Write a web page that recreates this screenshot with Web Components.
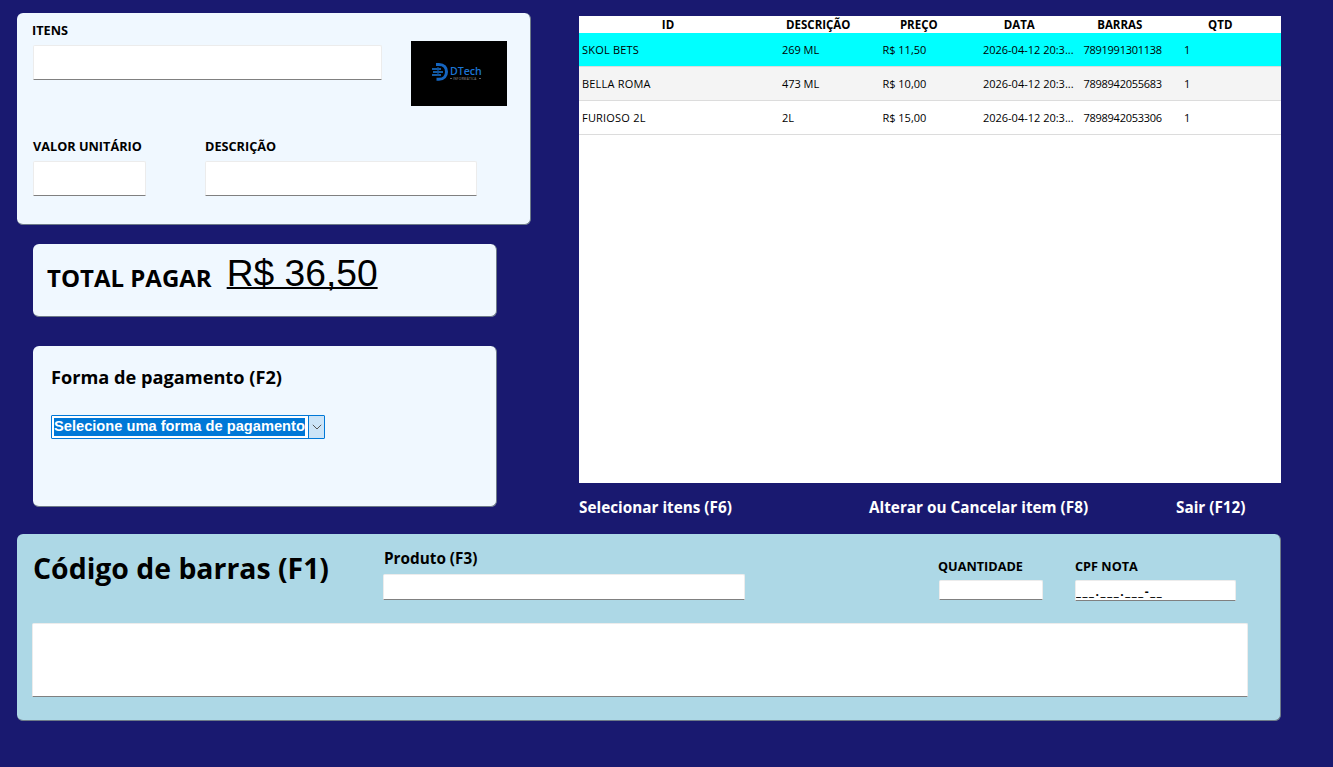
<!DOCTYPE html>
<html lang="pt-BR">
<head>
<meta charset="utf-8">
<title>PDV</title>
<style>
  html, body { margin: 0; height: 767px; overflow: hidden; background: #191970; }
  body { font-family: "Open Sans", "Noto Sans", sans-serif; color: #000; }
</style>
</head>
<body>
<pdv-app></pdv-app>

<script>
// Panel with rounded corners
class PdvPanel extends HTMLElement {
  constructor() {
    super();
    this.attachShadow({ mode: 'open' });
    this.shadowRoot.innerHTML = `
      <style>
        :host {
          display: block;
          box-sizing: border-box;
          background: var(--panel-bg, #f0f8ff);
          border-radius: 6px;
          border-right: 1px solid #6d7a88;
          border-bottom: 1px solid #6d7a88;
        }
      </style>
      <slot></slot>
    `;
  }
}

// Label over a flat input box
class PdvField extends HTMLElement {
  constructor() {
    super();
    this.attachShadow({ mode: 'open' });
    const label = this.getAttribute('label') || '';
    const value = this.getAttribute('value') || '';
    this.shadowRoot.innerHTML = `
      <style>
        :host { display: block; }
        .label {
          display: block;
          font-weight: 700;
          font-size: var(--label-size, 12.7px);
          line-height: var(--label-line, 14px);
          margin: 0 0 var(--label-gap, 8px) var(--label-x, 0);
          white-space: nowrap;
        }
        .box {
          box-sizing: border-box;
          width: var(--box-w, 100px);
          height: var(--box-h, 35px);
          margin-left: var(--box-x, 0);
          background: #fff;
          border: 1px solid #ececec;
          border-bottom: 1px solid #808080;
          border-radius: 2px 2px 0 0;
          font-size: 12px;
          font-weight: 700;
          letter-spacing: 1.6px;
          line-height: 14px;
          padding-top: 4px;
          white-space: nowrap;
          overflow: hidden;
        }
      </style>
      ${label ? `<span class="label">${label}</span>` : ''}
      <div class="box">${value}</div>
    `;
  }
}

// Logo on black
class PdvLogo extends HTMLElement {
  constructor() {
    super();
    this.attachShadow({ mode: 'open' });
    this.shadowRoot.innerHTML = `
      <style>
        :host { display: block; width: 96px; height: 65px; background: #000; }
        svg { display: block; }
      </style>
      <svg width="96" height="65" viewBox="0 0 96 65">
        <path d="M25 23.5h3c5 0 7.5 3.2 7.5 7.3s-2.5 7.5-7.5 7.5h-2.5" fill="none" stroke="#1565c0" stroke-width="3"/>
        <path d="M21 28h9M22 31h10M21 34h9" stroke="#1a78d8" stroke-width="1.5"/>
        <path d="M27 26v9" stroke="#0f4f9c" stroke-width="1.2"/>
        <text x="39" y="33.5" font-family="Open Sans, sans-serif" font-size="10.6" font-weight="600" fill="#1c74d4">DTech</text>
        <path d="M39 37.5h2M68 37.5h2" stroke="#8a8a8a" stroke-width=".7"/>
        <text x="42" y="38.6" font-family="Open Sans, sans-serif" font-size="3.1" letter-spacing=".3" fill="#9a9a9a">INFORMÁTICA</text>
      </svg>
    `;
  }
}

// Payment dropdown, focused look
class PdvSelect extends HTMLElement {
  constructor() {
    super();
    this.attachShadow({ mode: 'open' });
    this.shadowRoot.innerHTML = `
      <style>
        :host {
          display: flex;
          box-sizing: border-box;
          width: 274px;
          height: 24px;
          background: #fff;
          border: 1px solid #0078d7;
          border-radius: 1px;
        }
        .text {
          flex: 1;
          display: flex;
          padding: 2px 3px 2px 2px;
        }
        .text span {
          flex: 1;
          background: #0078d7;
          color: #fff;
          font: 700 14.67px/16px "Liberation Sans", Arial, sans-serif;
          white-space: nowrap;
          overflow: hidden;
        }
        .btn {
          width: 15px;
          background: #cce4f7;
          border-left: 1px solid #0078d7;
          display: flex;
          align-items: center;
          justify-content: center;
        }
      </style>
      <div class="text"><span><slot></slot></span></div>
      <div class="btn">
        <svg width="10" height="6" viewBox="0 0 10 6"><path d="M.8.8 5 5l4.2-4.2" fill="none" stroke="#555" stroke-width="1"/></svg>
      </div>
    `;
  }
}

// Sale items
class PdvTable extends HTMLElement {
  constructor() {
    super();
    this.attachShadow({ mode: 'open' });
    const rows = [
      ['SKOL BETS', '269 ML', 'R$ 11,50', '2026-04-12 20:3...', '7891991301138', '1'],
      ['BELLA ROMA', '473 ML', 'R$ 10,00', '2026-04-12 20:3...', '7898942055683', '1'],
      ['FURIOSO 2L', '2L', 'R$ 15,00', '2026-04-12 20:3...', '7898942053306', '1']
    ];
    const head = ['ID', 'DESCRIÇÃO', 'PREÇO', 'DATA', 'BARRAS', 'QTD'];
    this.shadowRoot.innerHTML = `
      <style>
        :host {
          display: block;
          height: 467px;
          background: #fff;
          font-size: 11px;
        }
        .head, .row { display: grid; }
        .head {
          grid-template-columns: 189px repeat(5, 100.5px);
          height: 17px;
          line-height: 17px;
          font-size: 11.5px;
          font-weight: 700;
          text-align: center;
        }
        .head div:first-child { padding-right: 11px; }
        .row {
          grid-template-columns: 199.9px repeat(5, 100.5px);
          box-sizing: border-box;
          height: 34px;
          line-height: 33px;
          padding-left: 3px;
          border-bottom: 1px solid #dcdcdc;
          white-space: nowrap;
        }
        .row div:nth-child(1) { letter-spacing: .2px; }
        .row div:nth-child(5) { letter-spacing: -.25px; }
        .row.selected { background: #00ffff; }
        .row.alt { background: #f4f4f4; }
      </style>
      <div class="head">${head.map(h => `<div>${h}</div>`).join('')}</div>
      ${rows.map((r, i) => `<div class="row ${i === 0 ? 'selected' : i === 1 ? 'alt' : ''}">${r.map(c => `<div>${c}</div>`).join('')}</div>`).join('')}
    `;
  }
}

// Whole screen
class PdvApp extends HTMLElement {
  constructor() {
    super();
    this.attachShadow({ mode: 'open' });
    this.shadowRoot.innerHTML = `
      <style>
        :host {
          display: block;
          box-sizing: border-box;
          width: 1333px;
          height: 767px;
          padding: 13px 0 0 17px;
        }
        .top { display: flex; height: 521px; }
        .left { width: 514px; margin-right: 48px; }
        .right { width: 702px; padding-top: 3px; }

        .items { height: 212px; padding: 10px 0 0 16px; }
        .items-top { display: flex; height: 116px; }
        .items-top pdv-logo { margin: 18px 0 0 29px; }
        .items-bottom { display: flex; gap: 59px; }

        .total {
          display: flex;
          align-items: baseline;
          gap: 15px;
          box-sizing: border-box;
          width: 464px;
          height: 73px;
          margin: 19px 0 0 16px;
          padding: 0 0 0 14px;
        }
        .total b { font-size: 24px; line-height: 67px; white-space: nowrap; }
        .total u {
          font: 37.2px/58px "Liberation Sans", Arial, sans-serif;
          white-space: nowrap;
          text-decoration-skip-ink: none;
          text-decoration-thickness: 2px;
          position: relative;
          top: -1px;
        }

        .pay {
          box-sizing: border-box;
          width: 464px;
          height: 161px;
          margin: 29px 0 0 16px;
          padding: 20px 0 0 18px;
        }
        .pay h2 { margin: 0 0 27px; font-size: 18.2px; line-height: 22px; font-weight: 700; white-space: nowrap; }

        .actions {
          display: flex;
          margin-top: 14px;
          color: #fff;
          font-size: 15.3px;
          line-height: 20px;
          font-weight: 700;
          white-space: nowrap;
        }
        .actions span:nth-child(1) { width: 290px; }
        .actions span:nth-child(2) { width: 307px; }

        .bar {
          --panel-bg: #add8e6;
          width: 1264px;
          height: 187px;
          padding: 0 0 0 15px;
        }
        .bar-top { display: flex; height: 89px; }
        .bar-top h1 { margin: 13px 0 0 1px; width: 350px; font-size: 28.4px; line-height: 42px; font-weight: 700; white-space: nowrap; }
        .prod { margin-top: 14px; }
        .qty { margin: 25px 0 0 194px; }
        .cpf { margin: 25px 0 0 32px; }
      </style>
      <div class="top">
        <div class="left">
          <pdv-panel class="items">
            <div class="items-top">
              <pdv-field label="ITENS" style="--box-w:349px;--label-x:-1px"></pdv-field>
              <pdv-logo></pdv-logo>
            </div>
            <div class="items-bottom">
              <pdv-field label="VALOR UNITÁRIO" style="--box-w:113px"></pdv-field>
              <pdv-field label="DESCRIÇÃO" style="--box-w:272px"></pdv-field>
            </div>
          </pdv-panel>
          <pdv-panel class="total"><b>TOTAL PAGAR</b><u>R$ 36,50</u></pdv-panel>
          <pdv-panel class="pay">
            <h2>Forma de pagamento (F2)</h2>
            <pdv-select>Selecione uma forma de pagamento</pdv-select>
          </pdv-panel>
        </div>
        <div class="right">
          <pdv-table></pdv-table>
          <div class="actions">
            <span>Selecionar itens (F6)</span>
            <span>Alterar ou Cancelar item (F8)</span>
            <span>Sair (F12)</span>
          </div>
        </div>
      </div>
      <pdv-panel class="bar">
        <div class="bar-top">
          <h1>Código de barras (F1)</h1>
          <pdv-field class="prod" label="Produto (F3)" style="--box-w:362px;--box-h:26px;--label-size:15.3px;--label-line:20px;--label-gap:6px;--label-x:1px"></pdv-field>
          <pdv-field class="qty" label="QUANTIDADE" style="--box-w:104px;--box-h:20px;--label-gap:7px;--label-x:-1px"></pdv-field>
          <pdv-field class="cpf" label="CPF NOTA" value="___.___.___-__" style="--box-w:161px;--box-h:21px;--label-gap:7px"></pdv-field>
        </div>
        <pdv-field style="--box-w:1216px;--box-h:74px"></pdv-field>
      </pdv-panel>
    `;
  }
}

customElements.define('pdv-panel', PdvPanel);
customElements.define('pdv-field', PdvField);
customElements.define('pdv-logo', PdvLogo);
customElements.define('pdv-select', PdvSelect);
customElements.define('pdv-table', PdvTable);
customElements.define('pdv-app', PdvApp);
</script>
</body>
</html>
